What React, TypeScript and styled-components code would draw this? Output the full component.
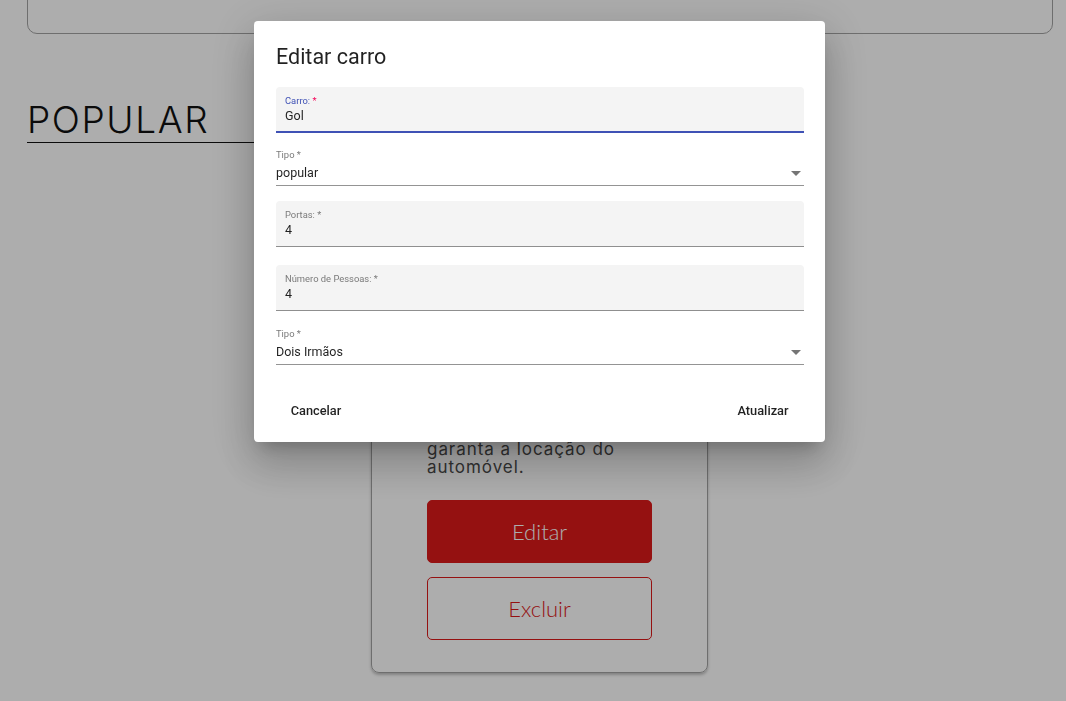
import React from "react";
import styled, { createGlobalStyle } from "styled-components";

const Global = createGlobalStyle`
  html, body { margin: 0; padding: 0; background: #fff; }
  body { font-family: Roboto, "Liberation Sans", Arial, sans-serif; overflow: hidden; }
  * { box-sizing: border-box; }
`;

const Page = styled.div`
  height: 701px;
  overflow: hidden;
  padding: 0 13px 0 27px;
  background: #fff;
`;

const TopCard = styled.div`
  height: 60px;
  margin-top: -26px;
  border: 1px solid #a3a3a3;
  border-radius: 10px;
`;

const SectionTitle = styled.h2`
  margin: 64px 0 0;
  width: 300px;
  height: 45px;
  font-family: Inter, "Open Sans", sans-serif;
  font-weight: 300;
  font-size: 37px;
  line-height: 44px;
  letter-spacing: 1.6px;
  color: #111;
  border-bottom: 1px solid #111;
`;

const CarCard = styled.div`
  margin: 20px 0 0 344px;
  width: 337px;
  padding: 24px 55px 32px;
  border: 1px solid #a3a3a3;
  border-radius: 8px;
  box-shadow: 0 2px 3px rgba(0, 0, 0, 0.25);
  display: flex;
  flex-direction: column;
`;

const Photo = styled.div`
  height: 160px;
  border-radius: 6px;
  background: #ddd;
`;

const CarName = styled.div`
  font-family: Inter, sans-serif;
  font-size: 24px;
  line-height: 30px;
  margin-bottom: 8px;
  color: #222;
`;

const Desc = styled.div`
  font-family: Inter, "Open Sans", sans-serif;
  font-weight: 400;
  font-size: 17px;
  line-height: 18px;
  letter-spacing: 0.95px;
  color: #4a4a4a;
  span { display: block; white-space: nowrap; }
`;

const CardButton = styled.button<{ $outline?: boolean }>`
  height: 63px;
  width: 100%;
  margin-top: ${(p) => (p.$outline ? "14px" : "24px")};
  border-radius: 5px;
  border: 1px solid #dc1a1a;
  background: ${(p) => (p.$outline ? "transparent" : "#dc1a1a")};
  color: ${(p) => (p.$outline ? "#dc1a1a" : "#fff")};
  font-family: Lato, "Open Sans", sans-serif;
  font-size: 22px;
  font-weight: 300;
`;

const Overlay = styled.div`
  position: fixed;
  inset: 0;
  background: rgba(0, 0, 0, 0.32);
  display: flex;
  justify-content: center;
  align-items: flex-start;
  padding: 21px 0 0 13px;
`;

const Dialog = styled.div`
  width: 571px;
  background: #fff;
  border-radius: 4px;
  box-shadow: 0px 11px 15px -7px rgba(0, 0, 0, 0.2), 0px 24px 38px 3px rgba(0, 0, 0, 0.14),
    0px 9px 46px 8px rgba(0, 0, 0, 0.12);
  display: flex;
  flex-direction: column;
`;

const Title = styled.h2`
  margin: 0;
  padding: 20px 22px 0;
  font-size: 21.5px;
  line-height: 32px;
  font-weight: 400;
  color: rgba(0, 0, 0, 0.87);
`;

const Form = styled.div`
  padding: 14px 21px 0 22px;
  display: flex;
  flex-direction: column;
  gap: 16px;
`;

const Filled = styled.div<{ $focused?: boolean; $extra?: number }>`
  height: 46px;
  margin-top: ${(p) => p.$extra || 0}px;
  padding: 8px 9px 0;
  background: #f4f4f4;
  border-radius: 4px 4px 0 0;
  border-bottom: ${(p) => (p.$focused ? "2px solid #3f51b5" : "1px solid #8f8f8f")};
  display: flex;
  flex-direction: column;
`;

const Label = styled.div<{ $focused?: boolean }>`
  font-size: 9.4px;
  line-height: 12px;
  color: ${(p) => (p.$focused ? "#3f51b5" : "#7a7a7a")};
  b { font-weight: 400; color: ${(p) => (p.$focused ? "#f50057" : "inherit")}; }
`;

const Value = styled.div`
  margin-top: 0;
  font-size: 12.5px;
  line-height: 18px;
  color: rgba(0, 0, 0, 0.87);
`;

const SelectBox = styled.div<{ $extra?: number }>`
  margin-top: ${(p) => p.$extra || 0}px;
  display: flex;
  flex-direction: column;
`;

const SelectRow = styled.div`
  margin-top: 3px;
  padding-bottom: 3px;
  border-bottom: 1px solid #949494;
  display: flex;
  align-items: center;
  justify-content: space-between;
  svg { margin-right: 3px; }
`;

const Actions = styled.div`
  padding: 27px 30px 14px;
  display: flex;
  justify-content: space-between;
`;

const TextButton = styled.button`
  min-width: 64px;
  height: 36px;
  padding: 0 6px;
  border: none;
  background: transparent;
  font-family: Roboto, sans-serif;
  font-size: 12.8px;
  font-weight: 500;
  color: rgba(0, 0, 0, 0.87);
  border-radius: 4px;
`;

const Arrow = () => (
  <svg width="10" height="5" viewBox="0 0 10 5">
    <path d="M0 0l5 5 5-5z" fill="#757575" />
  </svg>
);

const Field = ({ label, value, focused, extra }: { label: string; value: string; focused?: boolean; extra?: number }) => (
  <Filled $focused={focused} $extra={extra}>
    <Label $focused={focused}>
      {label} <b>*</b>
    </Label>
    <Value>{value}</Value>
  </Filled>
);

const Select = ({ label, value, extra }: { label: string; value: string; extra?: number }) => (
  <SelectBox $extra={extra}>
    <Label>
      {label} <b>*</b>
    </Label>
    <SelectRow>
      <Value>{value}</Value>
      <Arrow />
    </SelectRow>
  </SelectBox>
);

export default function App() {
  return (
    <>
      <Global />
      <Page>
        <TopCard />
        <SectionTitle>POPULAR</SectionTitle>
        <CarCard>
          <Photo />
          <CarName>Gol</CarName>
          <Desc>
            <span>Veículo com 4 portas,</span>
            <span>para até 4 pessoas.</span>
            <span>Reserve agora e</span>
            <span>garanta a locação do</span>
            <span>automóvel.</span>
          </Desc>
          <CardButton>Editar</CardButton>
          <CardButton $outline>Excluir</CardButton>
        </CarCard>
      </Page>
      <Overlay>
        <Dialog>
          <Title>Editar carro</Title>
          <Form>
            <Field label="Carro:" value="Gol" focused />
            <Select label="Tipo" value="popular" />
            <Field label="Portas:" value="4" extra={-1} />
            <Field label="Número de Pessoas:" value="4" extra={2} />
            <Select label="Tipo" value="Dois Irmãos" extra={1} />
          </Form>
          <Actions>
            <TextButton>Cancelar</TextButton>
            <TextButton>Atualizar</TextButton>
          </Actions>
        </Dialog>
      </Overlay>
    </>
  );
}
